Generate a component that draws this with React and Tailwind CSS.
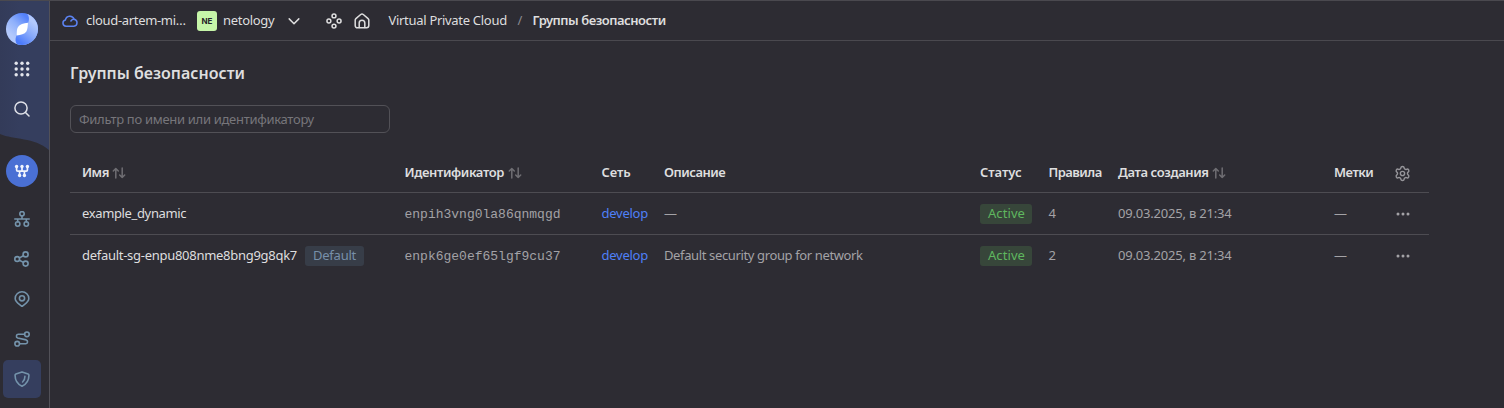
import { Settings } from 'lucide-react';

function Icon({ size = 16, sw = 1.5, className = '', children }) {
  return (
    <svg width={size} height={size} viewBox="0 0 16 16" fill="none" stroke="currentColor" strokeWidth={sw} strokeLinecap="round" strokeLinejoin="round" className={'shrink-0 ' + className}>
      {children}
    </svg>
  );
}

const Logo = () => (
  <svg width="32" height="32" viewBox="0 0 32 32">
    <defs>
      <linearGradient id="logoLeft" gradientUnits="userSpaceOnUse" x1="5" y1="22" x2="21" y2="5">
        <stop offset="0" stopColor="#b3c9fc" />
        <stop offset=".5" stopColor="#8fb0fb" />
        <stop offset="1" stopColor="#5582fb" />
      </linearGradient>
      <linearGradient id="logoRight" gradientUnits="userSpaceOnUse" x1="27" y1="9" x2="12" y2="28">
        <stop offset="0" stopColor="#b3c9fc" />
        <stop offset=".5" stopColor="#86a8fb" />
        <stop offset="1" stopColor="#4c7bfb" />
      </linearGradient>
      <clipPath id="logoClip"><circle cx="16" cy="16" r="16" /></clipPath>
    </defs>
    <g clipPath="url(#logoClip)">
      <rect width="32" height="32" fill="url(#logoLeft)" />
      <path d="M20.500 0C23.700 3 23.200 7 22.200 9.800L10.500 22.500C9 26 9 29 11.500 32H32V0Z" fill="url(#logoRight)" />
    </g>
    <path d="M22 9.800C17.500 10.200 13.800 11.400 12 14 10.600 16.200 10.800 19.300 10.700 22.500 14.800 22 18.600 21 20.400 18.400 21.800 16.100 21.600 13 22 9.800Z" fill="#fff" />
  </svg>
);

const AppsGrid = () => (
  <svg width="16" height="16" viewBox="0 0 16 16" fill="#e3e5ec">
    {[2.2, 8, 13.7].map((y) => [2.2, 8, 13.7].map((x) => <circle key={x + '-' + y} cx={x} cy={y} r="1.7" />))}
  </svg>
);

const VpcIcon = () => (
  <svg width="16" height="16" viewBox="0 0 16 16" fill="none" stroke="#f1f4fd" strokeWidth="1.7">
    <path d="M2.600 3.500V7Q2.600 8.200 3.800 8.200H12.200Q13.400 8.200 13.400 7V3.500M8 3.500V8.200M5.600 8.200V12M10.400 8.200V12" />
    <g fill="#f1f4fd" stroke="none">
      <circle cx="2.600" cy="3.500" r="1.700" />
      <circle cx="8" cy="3.500" r="1.700" />
      <circle cx="13.400" cy="3.500" r="1.700" />
      <circle cx="5.600" cy="12.500" r="1.700" />
      <circle cx="10.400" cy="12.500" r="1.700" />
    </g>
  </svg>
);

const SortIcon = ({ className = 'ml-0.5' }) => (
  <Icon sw={1.5} className={className + ' text-[#6f6e73]'}>
    <path d="M4.800 13V3.500M2.300 6L4.800 3.500L7.300 6M11.200 3V12.500M8.700 10L11.200 12.500L13.700 10" />
  </Icon>
);

const Dots = () => (
  <svg width="16" height="16" viewBox="0 0 16 16" fill="#a3a2a6">
    <circle cx="3" cy="8" r="1.500" />
    <circle cx="8" cy="8" r="1.500" />
    <circle cx="13" cy="8" r="1.500" />
  </svg>
);

const NAV = [
  <Icon key="net" sw={1.6}>
    <circle cx="8" cy="2.800" r="2.200" />
    <path d="M8 5V8M.8 8H15.200M3.700 8V11M12.300 8V11" />
    <circle cx="3.700" cy="13" r="2.200" />
    <circle cx="12.300" cy="13" r="2.200" />
  </Icon>,
  <Icon key="share" sw={1.6}>
    <circle cx="3.200" cy="8" r="2.400" />
    <circle cx="11.600" cy="3.400" r="2.500" />
    <circle cx="11.600" cy="12.600" r="2.500" />
    <path d="M5.400 6.900L9.400 4.700M5.400 9.200L9.400 11.400" />
  </Icon>,
  <Icon key="pin" sw={1.6}>
    <path d="M8 15.700C6.500 13.600 1.200 11.600 1.200 7.400A6.800 6.600 0 0 1 14.800 7.400C14.800 11.600 9.500 13.600 8 15.700Z" />
    <circle cx="8" cy="7.300" r="2.600" />
  </Icon>,
  <Icon key="route" sw={1.6}>
    <circle cx="12.900" cy="3.300" r="2.300" />
    <circle cx="3.200" cy="12.700" r="2.300" />
    <path d="M10.600 3.300H4.300A1.900 1.900 0 0 0 3.700 7L12.200 8.900A1.950 1.950 0 0 1 11.800 12.700H5.600" />
  </Icon>,
];

const COLS = 'grid grid-cols-[322.5px_197px_62.5px_316px_68.5px_69.5px_216px_61px_1fr] items-center pl-3 ';

const ROWS = [
  { name: 'example_dynamic', track: 'tracking-[-0.36px]', id: 'enpih3vng0la86qnmqgd', desc: '—', rules: '4' },
  { name: 'default-sg-enpu808nme8bng9g8qk7', track: 'tracking-[-0.28px]', isDefault: true, id: 'enpk6ge0ef65lgf9cu37', desc: 'Default security group for network', rules: '2' },
];

function Row({ row, last }) {
  return (
    <div className={COLS + 'text-[#a3a2a6] ' + (last ? 'h-[42px]' : 'h-[42px] border-b border-[#4d4c52]')}>
      <span className="flex items-center">
        <span className={'pb-0.5 text-[#dededf] ' + row.track}>{row.name}</span>
        {row.isDefault && <span className="ml-2 flex h-5 w-[59px] items-center justify-center rounded-[3px] bg-[#373d48] pb-0.5 tracking-[-0.25px] text-[#7790aa]">Default</span>}
      </span>
      <span className="pt-0.5 font-['Liberation_Mono',monospace]">{row.id}</span>
      <a className="pb-0.5 tracking-[-0.25px] text-[#4f80f7]">develop</a>
      <span className="pb-0.5 tracking-[-0.37px]">{row.desc}</span>
      <span className="flex h-5 w-[52px] items-center justify-center rounded-[3px] bg-[#37463a] pb-0.5 pl-px tracking-[0.08px] text-[#5fb75f]">Active</span>
      <span className="pb-0.5">{row.rules}</span>
      <span className="pb-0.5 tracking-[-0.2px]">09.03.2025, в 21:34</span>
      <span className="pb-0.5">—</span>
      <Dots />
    </div>
  );
}

export default function App() {
  return (
    <div className="flex h-[408px] w-[1504px] overflow-hidden border-t border-[#4a494f] bg-[#2d2c33] font-['Noto_Sans',sans-serif] text-[13px] leading-[18px] text-[#dededf]">
      <aside className="relative flex w-[50px] shrink-0 flex-col border-r border-[#525158] text-[#7493ab]">
        <svg className="absolute left-0 top-0" width="50" height="151" viewBox="0 0 50 151">
          <defs>
            <linearGradient id="side" x1="0" x2="1" y1="0" y2="0">
              <stop offset="0" stopColor="#333b59" />
              <stop offset=".4" stopColor="#353e5e" />
            </linearGradient>
          </defs>
          <path d="M0 0H49V149C34 136 14 139 0 133Z" fill="url(#side)" />
        </svg>
        <div className="relative flex w-11 flex-col items-center">
          <div className="mt-3"><Logo /></div>
          <div className="flex h-10 items-center pt-2"><AppsGrid /></div>
          <div className="flex h-10 items-center pt-2 text-[#dfe1e8]">
            <Icon>
              <circle cx="7" cy="7" r="6.100" />
              <path d="M11.500 11.500L15 15" />
            </Icon>
          </div>
          <div className="mt-[30px] flex size-8 items-center justify-center rounded-full bg-[#4a70d4]"><VpcIcon /></div>
          <div className="mt-3 flex flex-col">
            {NAV.map((icon, i) => <div key={i} className="flex h-10 items-center">{icon}</div>)}
          </div>
          <div className="mt-px flex size-[38px] items-center justify-center rounded-[5px] bg-[#353e5e]">
            <Icon sw={1.6}>
              <path d="M8 .9L14.100 2.900Q14.900 3.200 14.900 4.100C15 9.500 12.500 13 8 15.200C3.500 13 1 9.500 1.100 4.100Q1.100 3.200 1.900 2.900Z" />
              <path d="M10.900 5.400C10.900 8 10.200 9.700 8.600 11" />
            </Icon>
          </div>
        </div>
      </aside>
      <main className="flex grow flex-col">
        <header className="flex h-10 items-center border-b border-[#4a494f] pl-3">
          <Icon className="text-[#5c83f2]">
            <path d="M4 13.300A3.200 3.200 0 0 1 3.400 7A4.500 4.500 0 0 1 12.100 6.200A3.600 3.600 0 0 1 11.900 13.300Z" />
            <path d="M12.100 6.200C10.800 6.200 9.600 6.800 8.900 8" />
          </Icon>
          <span className="ml-2 w-[111px] pb-0.5 tracking-[-0.32px]">cloud-artem-mi…</span>
          <span className="flex size-5 items-center justify-center rounded-[3px] bg-[#c6f5a9] font-['Inter',sans-serif] text-[8px] font-bold text-[#25242a]">NE</span>
          <span className="ml-[6px] w-[63px] pb-0.5 tracking-[-0.3px]">netology</span>
          <Icon><path d="M3.200 5.900L8 10.700L12.800 5.900" /></Icon>
          <Icon className="ml-6">
            <circle cx="8" cy="2.900" r="1.950" />
            <circle cx="2.900" cy="8" r="1.950" />
            <circle cx="13.100" cy="8" r="1.950" />
            <circle cx="8" cy="13.100" r="1.950" />
          </Icon>
          <Icon className="ml-3">
            <path d="M1.200 7.100Q1.200 6.200 1.900 5.600L6.700 1.500Q8 .5 9.300 1.500L14.100 5.600Q14.800 6.200 14.800 7.100V12.600A2.200 2.200 0 0 1 12.600 14.800H3.400A2.200 2.200 0 0 1 1.200 12.600Z" />
            <path d="M5.200 14.500V10A2.800 2.800 0 0 1 10.800 10V14.500" />
          </Icon>
          <span className="ml-[18.5px] w-[129px] whitespace-nowrap pb-0.5 tracking-[-0.3px]">Virtual Private Cloud</span>
          <span className="w-[15px] pb-0.5 text-[#8b8a8f]">/</span>
          <span className="pb-0.5 font-semibold tracking-[-0.47px]">Группы безопасности</span>
        </header>
        <section className="flex flex-col pl-5">
          <h1 className="mt-5 text-[16px] font-semibold leading-6">Группы безопасности</h1>
          <div className="mt-5 flex h-7 w-80 items-center rounded-md border border-[#525157] pl-2 tracking-[-0.3px] text-[#77767b]">Фильтр по имени или идентификатору</div>
          <div className="mt-5 w-[1359px]">
            <div className={COLS + 'h-10 border-b border-[#4d4c52] font-semibold'}>
              <span className="flex items-center tracking-[-0.5px]"><span className="pb-0.5">Имя</span><SortIcon /></span>
              <span className="flex items-center tracking-[-0.39px]"><span className="pb-0.5">Идентификатор</span><SortIcon className="ml-[3px]" /></span>
              <span className="pb-0.5 tracking-[-0.1px]">Сеть</span>
              <span className="pb-0.5 tracking-[-0.5px]">Описание</span>
              <span className="pb-0.5 tracking-[-0.06px]">Статус</span>
              <span className="pb-0.5 tracking-[-0.55px]">Правила</span>
              <span className="flex items-center tracking-[-0.4px]"><span className="pb-0.5">Дата создания</span><SortIcon /></span>
              <span className="pb-0.5 tracking-[-0.5px]">Метки</span>
              <Settings size={17} strokeWidth={2} className="-ml-px mt-px text-[#96959a]" />
            </div>
            {ROWS.map((r, i) => <Row key={r.id} row={r} last={i === ROWS.length - 1} />)}
          </div>
        </section>
      </main>
    </div>
  );
}
